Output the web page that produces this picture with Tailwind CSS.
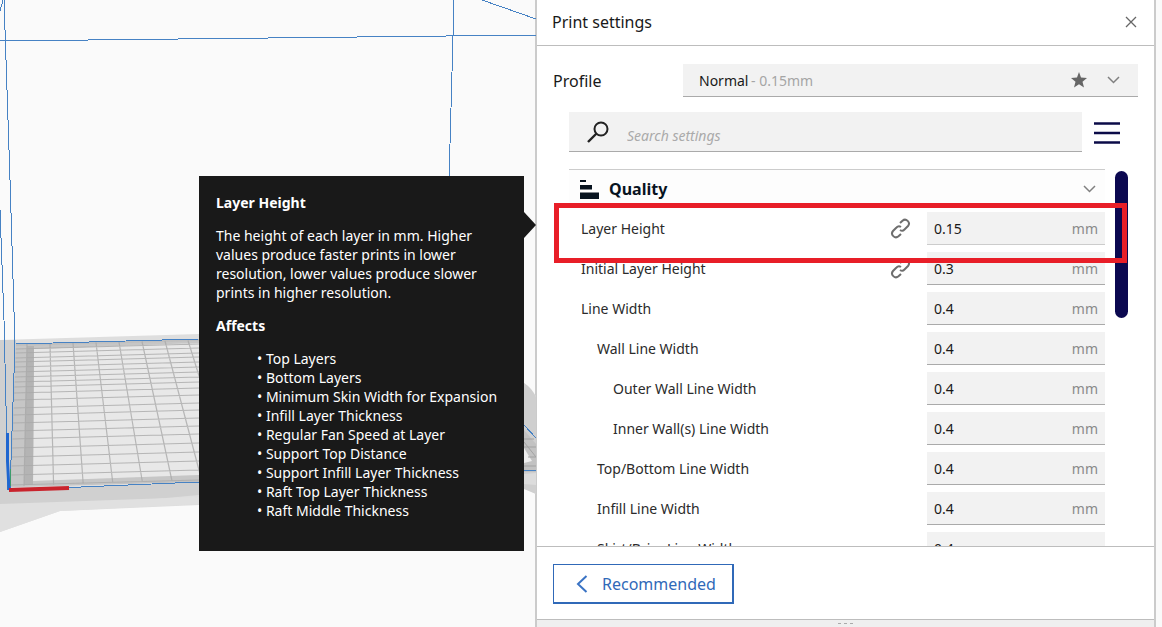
<!DOCTYPE html>
<html lang="en">
<head>
<meta charset="utf-8">
<title>Print settings</title>
<script src="https://cdn.jsdelivr.net/npm/@tailwindcss/browser@4"></script>
</head>
<body class="flex h-screen overflow-hidden bg-[#fafafa] font-['Noto_Sans',sans-serif] text-sm text-[#191919]">

<main class="relative min-w-0 flex-1">
  <!-- Build plate and build volume outline -->
  <svg class="absolute top-0 left-0" width="536" height="627" viewBox="0 0 536 627" fill="none" aria-hidden="true">
    <path d="M0 340L199 334L524 383L536 396V494L524 488L199 505L60 511L0 532Z" fill="#dedede"/>
    <path d="M0 340L16 340V344L10 490L199 482V495L0 513Z" fill="#d0d0d0"/>
    <path d="M0 504L199 497V504L60 511L0 532Z" fill="#e0e0e0"/>
    <path d="M16 344L199 339V482L10 487Z" fill="#bfbfbf"/>
    <path d="M16 346L199 341V345L34 349L33 481L199 475V481L11 487Z" fill="#c6c6c6"/>
    <path d="M34 349L199 343V475L33 481Z" fill="#e8e8e8"/>
    <path d="M27 346L34 346L33 485L24 485Z" fill="#b4b4b4"/>
    <path id="grid" stroke="#a9a9a9" stroke-opacity=".8" stroke-width="1.200"/>
    <path d="M524 383Q532 388 536 397V494L524 489Z" fill="#cfcfcf"/>
    <path d="M524 430L536 444V472H524Z" fill="#c2c2c2"/>
    <path d="M524 448L532 461L524 463Z" fill="#eee"/>
    <path d="M524 474L536 473V485L524 484Z" fill="#dcdcdc"/>
    <path d="M524 439H534M524 447H536M528 457H536M524 466H536M524 442L536 457" stroke="#a2a2a2"/>
    <g stroke="#4682c4" shape-rendering="crispEdges">
      <path d="M0 41L536 35M4 0L10 180L15 344L10 490M3 0L0 11M454 0L449 180M482 0L536 19M0 210L4 320L8 490"/>
      <path d="M16 344L199 339M10 490L199 482M524 425L536 438M524 471L536 470"/>
    </g>
    <path d="M7.500 433V461L9 490" stroke="#1f66d0" stroke-width="3"/>
    <path d="M10.500 469V486" stroke="#3c9c6c"/>
    <path d="M9 490L69 488" stroke="#c9232c" stroke-width="4"/>
  </svg>

  <aside role="tooltip" class="absolute top-44 right-[11px] w-[325px] bg-[#191919] px-[17px] pt-[17px] pb-[31px] leading-[19px] text-white">
    <h2 class="font-bold">Layer Height</h2>
    <p class="mt-[14px]">The height of each layer in mm. Higher<br>values produce faster prints in lower<br>resolution, lower values produce slower<br>prints in higher resolution.</p>
    <h2 class="mt-[14px] font-bold">Affects</h2>
    <ul class="mt-[14px] pl-[41px]">
      <li>• Top Layers</li>
      <li>• Bottom Layers</li>
      <li>• Minimum Skin Width for Expansion</li>
      <li>• Infill Layer Thickness</li>
      <li>• Regular Fan Speed at Layer</li>
      <li>• Support Top Distance</li>
      <li>• Support Infill Layer Thickness</li>
      <li>• Raft Top Layer Thickness</li>
      <li>• Raft Middle Thickness</li>
    </ul>
    <svg class="absolute top-9 left-full" width="12" height="26" viewBox="0 0 12 26" aria-hidden="true"><path d="M0 0L12 13L0 26Z" fill="#191919"/></svg>
  </aside>
</main>

<section class="mr-[6px] flex w-[621px] shrink-0 flex-col border-x-2 border-[#cbcbcb] bg-white" aria-label="Print settings">
  <header class="flex h-[46px] shrink-0 items-center justify-between border-b border-[#bdbdbd] pr-[15px] pb-[2px] pl-[15px]">
    <h1 class="text-base">Print settings</h1>
    <button class="p-[2px]" aria-label="Close"><svg width="12" height="12" viewBox="0 0 12 12" stroke="#666" stroke-width="1.300"><path d="M1 1L11 11M11 1L1 11"/></svg></button>
  </header>

  <div class="mt-[18px] flex shrink-0 items-center justify-between px-4">
    <label for="profile" class="text-base">Profile</label>
    <div class="grid h-[33px] w-[455px] items-center border-b border-[#aaa] bg-[#f2f2f2]">
      <select id="profile" class="col-start-1 row-start-1 h-8 w-full appearance-none pt-[2px] pl-4"><option>Normal</option></select>
      <div class="pointer-events-none col-start-1 row-start-1 flex items-center pr-[18px] pl-[68px]">
        <span class="flex-1 pt-[2px] text-[#a5a5a5]">- 0.15mm</span>
        <svg width="16" height="16" viewBox="0 0 16 16" fill="#666" aria-hidden="true"><path d="M8 0L10 5.500L16 6L11.500 9.800L13 15.500L8 12.300L3 15.500L4.500 9.800L0 6L6 5.500Z"/></svg>
        <svg class="ml-5" width="13" height="8" viewBox="0 0 13 8" fill="none" stroke="#808080" stroke-width="1.500" aria-hidden="true"><path d="M1 1L6.500 6.500L12 1"/></svg>
      </div>
    </div>
  </div>

  <div class="mt-[15px] flex shrink-0 items-center gap-3 pr-[34px] pl-8">
    <label class="flex h-10 flex-1 items-center border-b border-[#aaa] bg-[#f2f2f2] pl-[18px]">
      <svg width="22" height="22" viewBox="0 0 22 22" fill="none" stroke="#222" aria-hidden="true"><circle cx="14" cy="8" r="6.500" stroke-width="2"/><path d="M9.500 12.500L1 21" stroke-width="2.400"/></svg>
      <input type="search" aria-label="Search settings" placeholder="Search settings" class="ml-[18px] min-w-0 flex-1 pt-2 italic outline-none placeholder:text-[#aaa]">
    </label>
    <button class="pt-[2px]" aria-label="Setting visibility"><svg width="26" height="24" viewBox="0 0 26 24" stroke="#0b0b48" stroke-width="2.600"><path d="M0 2.500H26M0 12H26M0 21.500H26"/></svg></button>
  </div>

  <div class="relative mt-[17px] flex min-h-0 flex-1 gap-[10px] pr-[26px] pl-8">
    <div class="flex-1 overflow-hidden border-t border-[#ccc]">
      <button class="flex h-[38px] w-full items-center bg-[#fdfdfd] pr-[9px] pl-[11px] text-left text-base font-bold text-[#08131f]">
        <svg width="20" height="20" viewBox="0 0 20 20" fill="#08131f" aria-hidden="true"><path d="M0 1H6V3H0ZM0 6H12V10.500H0ZM0 13.500H19V20H0Z"/></svg>
        <span class="ml-[9px] flex-1">Quality</span>
        <svg width="13" height="8" viewBox="0 0 13 8" fill="none" stroke="#808080" stroke-width="1.500" aria-hidden="true"><path d="M1 1L6.500 6.500L12 1"/></svg>
      </button>
      <div id="rows"></div>
    </div>
    <div class="mt-[2px] h-[147px] w-[13px] rounded-full bg-[#0b0850]"></div>
    <div class="pointer-events-none absolute top-[34px] right-[27px] left-[17px] h-[60px] border-5 border-[#e81e28]"></div>
  </div>

  <footer class="shrink-0 border-t border-[#bdbdbd] px-4 pt-[17px] pb-[15px]">
    <button class="flex h-10 w-[181px] items-center border-2 border-t-1 border-l-1 border-[#3069b8] pl-[22px] text-base text-[#3069b8]">
      <svg width="12" height="18" viewBox="0 0 12 18" fill="none" stroke="#3a73c4" stroke-width="2" aria-hidden="true"><path d="M10.500 1L2 9L10.500 17"/></svg>
      <span class="ml-[14px]">Recommended</span>
    </button>
  </footer>
  <div class="flex h-2 shrink-0 justify-center gap-[3px] border-t border-[#bdbdbd] bg-[#efefef] pt-[3px]">
    <i class="h-px w-[3px] bg-[#aaa]"></i><i class="h-px w-[3px] bg-[#aaa]"></i><i class="h-px w-[3px] bg-[#aaa]"></i>
  </div>
</section>

<template id="row">
  <div class="group flex h-10 items-center pl-3">
    <label class="flex-1 pt-[2px] text-[#2b2b2b]"></label>
    <svg class="mr-4" width="21" height="21" viewBox="0 0 21 21" fill="none" stroke="#6e6e6e" stroke-width="2" aria-hidden="true"><path d="M10 5L12.500 2.700C16 -.2 21 4.300 18 8L14.500 11.500C13.300 12.800 11.500 13 10 12M11 16L8.500 18.300C5 21.200 0 16.700 3 13L6.500 9.500C7.700 8.200 9.500 8 11 9"/></svg>
    <div class="flex h-[33px] w-[178px] items-center border-b border-[#aaa] bg-[#f2f2f2] pt-[2px] pr-[7px] pl-[7px] group-first:border-[#ccc]">
      <input type="text" class="min-w-0 flex-1 outline-none">
      <span class="text-[#8a8a8a]">mm</span>
    </div>
  </div>
</template>

<script>
const settings = [
  ['Layer Height', '0.15', 0, true], ['Initial Layer Height', '0.3', 0, true], ['Line Width', '0.4', 0],
  ['Wall Line Width', '0.4', 1], ['Outer Wall Line Width', '0.4', 2], ['Inner Wall(s) Line Width', '0.4', 2],
  ['Top/Bottom Line Width', '0.4', 1], ['Infill Line Width', '0.4', 1], ['Skirt/Brim Line Width', '0.4', 1]
];
settings.forEach(([name, value, depth, linked], i) => {
  const row = document.getElementById('row').content.cloneNode(true);
  const label = row.querySelector('label'), input = row.querySelector('input');
  label.textContent = name;
  label.htmlFor = input.id = 'setting-' + i;
  label.style.paddingLeft = depth * 16 + 'px';
  input.setAttribute('value', value);
  if (!linked) row.querySelector('svg').remove();
  document.getElementById('rows').append(row);
});
// Perspective grid on the build plate, clipped at the tooltip's edge
let d = '';
for (let i = 0; i < 8; i++) {
  const top = 27 + 23 * i, bottom = 24 + 29.6 * i;
  d += `M${top} ${344 - i / 2}L${bottom} ${486 - i}`;
}
[349, 353, 358, 362, 367, 372, 377, 382, 387, 393, 400, 408, 415, 423, 431, 439, 448, 457, 466, 475, 485]
  .forEach(y => { d += `M${16 - (y - 344) / 28} ${y}L199 ${y - 5}`; });
document.getElementById('grid').setAttribute('d', d);
</script>
</body>
</html>
